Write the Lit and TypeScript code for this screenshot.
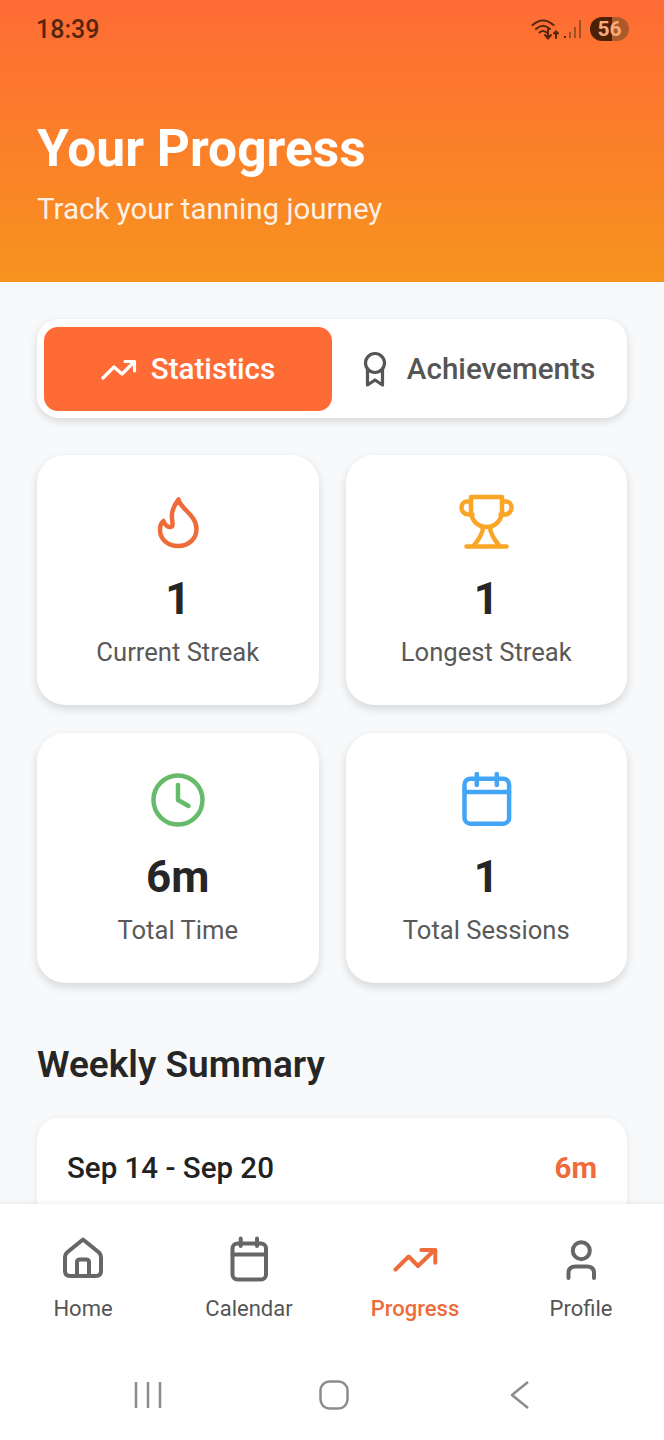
import { html, css, LitElement } from 'lit';
import { customElement } from 'lit/decorators.js';

const flame = html`<svg class="ico" width="56" height="56" viewBox="0 0 56 56" style="color:#ee6c39">
  <path d="M28.500 5.500C30.500 15 46.500 21 46.500 35C46.500 45 38.500 52 28 52C17.500 52 10 45 10 36C10 32 11.500 28.500 13.500 27C14.500 31 18.500 34 22 32.500C25 30 16.500 21 28.500 5.500Z"/>
</svg>`;

const trophy = html`<svg class="ico" width="56" height="56" viewBox="0 0 56 56" style="color:#f9a526">
  <path d="M13 3H44V17C44 26 37.500 33 28.500 33C19.500 33 13 26 13 17Z"/>
  <path d="M13 7.500H9C5.500 7.500 3.500 10.500 3.500 13.500C3.500 17 6 20.500 10 20.500H14.500"/>
  <path d="M44 7.500H48C51.500 7.500 53.500 10.500 53.500 13.500C53.500 17 51 20.500 47 20.500H42.500"/>
  <path d="M25 33C25 40 20.500 46 15.500 52"/>
  <path d="M32 33C32 40 36.500 46 41.500 52"/>
  <path d="M8.500 52.500H48.500"/>
</svg>`;

const clock = html`<svg class="ico" width="56" height="56" viewBox="0 0 56 56" style="color:#66bb6a">
  <circle cx="28" cy="28" r="24.500"/>
  <path d="M28 13V28L38.500 34"/>
</svg>`;

const calendar = html`<svg class="ico" width="56" height="56" viewBox="0 0 56 56" style="color:#42a5f5">
  <rect x="6.500" y="6.700" width="44.600" height="45" rx="6"/>
  <path d="M6.500 20H51.100M18.800 2V13M38.800 2V13"/>
</svg>`;

const tabTrend = html`<svg class="ico tab-ico" width="36" height="36" viewBox="0 0 36 36" style="color:#fff">
  <path d="M2 27L13 16L21 23L33 11"/>
  <path d="M24 10.500H33.500V20"/>
</svg>`;

const tabAward = html`<svg class="ico tab-ico" width="36" height="36" viewBox="0 0 36 36" style="color:#555">
  <circle cx="18" cy="12" r="9.500"/>
  <path d="M10.500 18V34L18 29L25.500 34V18"/>
</svg>`;

const navHome = html`<svg class="ico nav" width="48" height="48" viewBox="0 0 48 48">
  <path d="M24 3.500L40 16.500Q42 18.500 42 21.500V35Q42 40 37 40H11Q6 40 6 35V21.500Q6 18.500 8 16.500Z"/>
  <path d="M18 40V26Q18 23.500 21 23.500H27Q30 23.500 30 26V40"/>
</svg>`;

const navCalendar = html`<svg class="ico nav" width="48" height="48" viewBox="0 0 48 48">
  <rect x="7.500" y="7.500" width="33.500" height="36" rx="5"/>
  <path d="M7.500 18.500H41M15.700 2.500V10M32 2.500V10"/>
</svg>`;

const navProgress = html`<svg class="ico nav" width="48" height="48" viewBox="0 0 48 48" style="color:#ee6c39">
  <path d="M4.500 33.500L17.700 20.500L27 30L43.500 14"/>
  <path d="M30.300 14H44.300V26.700"/>
</svg>`;

const navProfile = html`<svg class="ico nav" width="48" height="48" viewBox="0 0 48 48">
  <circle cx="24.300" cy="14.700" r="8.500"/>
  <path d="M11.500 42V37Q11.500 30.500 18.500 30.500H30Q37 30.500 37 37V42"/>
</svg>`;

const stats = [
  { icon: flame, value: '1', label: 'Current Streak' },
  { icon: trophy, value: '1', label: 'Longest Streak' },
  { icon: clock, value: '6m', label: 'Total Time' },
  { icon: calendar, value: '1', label: 'Total Sessions' },
];

const navItems = [
  { icon: navHome, label: 'Home', active: false },
  { icon: navCalendar, label: 'Calendar', active: false },
  { icon: navProgress, label: 'Progress', active: true },
  { icon: navProfile, label: 'Profile', active: false },
];

@customElement('app-root')
export class AppRoot extends LitElement {

  static styles = [css`
    :host {
      display: flex;
      flex-direction: column;
      width: 664px;
      height: 1440px;
      overflow: hidden;
      background: #f8f9fa;
      font-family: Roboto, "Liberation Sans", sans-serif;
    }

    .ico {
      display: block;
      fill: none;
      stroke: currentColor;
      stroke-width: 4.5;
      stroke-linecap: round;
      stroke-linejoin: round;
      flex: none;
    }

    .ico.tab-ico { stroke-width: 3.2; }
    .ico.nav { stroke-width: 4; color: #666; }

    /* Header */
    .header {
      height: 282px;
      flex: none;
      box-sizing: border-box;
      padding: 14px 37px 0;
      background: linear-gradient(180deg, #ff6b35, #f7931e);
    }

    .status {
      display: flex;
      align-items: center;
      justify-content: space-between;
      height: 30px;
    }

    .time {
      font-size: 25px;
      font-weight: 500;
      color: #55260f;
      margin-left: -1px;
    }

    .status-icons {
      display: flex;
      align-items: center;
      margin-right: -2px;
    }

    .status-icons svg { display: block; }

    .battery {
      width: 39px;
      height: 24px;
      margin-left: 7px;
      border-radius: 12px;
      overflow: hidden;
      display: flex;
      align-items: center;
      justify-content: center;
      background: linear-gradient(90deg, #4d2106 0 56%, #ac5a2b 56%);
      color: #f8ab78;
      font-size: 21px;
      font-weight: 700;
      line-height: 24px;
    }

    h1 {
      margin: 75px 0 0;
      font-size: 51.5px;
      line-height: 60px;
      font-weight: 700;
      color: #fff;
    }

    .sub {
      margin-top: 12px;
      font-size: 29.5px;
      line-height: 36px;
      color: rgba(255, 255, 255, 0.9);
    }

    /* Content */
    .content {
      flex: 1;
      min-height: 0;
      overflow: hidden;
      padding: 37px 37px 0;
    }

    .tabs {
      display: flex;
      height: 99px;
      box-sizing: border-box;
      padding: 8px 7px 7px;
      background: #fff;
      border-radius: 22px;
      box-shadow: 0 3px 8px rgba(0, 0, 0, 0.14);
    }

    .tab {
      flex: 1;
      display: flex;
      align-items: center;
      justify-content: center;
      gap: 14px;
      border-radius: 14px;
      font-size: 29.6px;
      font-weight: 500;
      color: #555;
    }

    .tab.active {
      background: #ff6b35;
      color: #fff;
    }

    .grid {
      display: grid;
      grid-template-columns: 1fr 1fr;
      gap: 28px 27px;
      margin-top: 37px;
    }

    .card {
      height: 250px;
      box-sizing: border-box;
      padding-top: 39px;
      display: flex;
      flex-direction: column;
      align-items: center;
      background: #fff;
      border-radius: 28px;
      box-shadow: 0 4px 10px rgba(0, 0, 0, 0.14);
    }

    .value {
      margin-top: 23px;
      font-size: 44px;
      line-height: 52px;
      font-weight: 700;
      color: #262626;
    }

    .label {
      margin-top: 12px;
      font-size: 25.6px;
      line-height: 30px;
      color: #595959;
    }

    h2 {
      margin: 60px 0 0;
      font-size: 37px;
      line-height: 44px;
      font-weight: 600;
      color: #262626;
    }

    .week {
      display: flex;
      justify-content: space-between;
      align-items: flex-start;
      margin-top: 31px;
      height: 200px;
      box-sizing: border-box;
      padding: 32px 30px 0;
      background: #fff;
      border-radius: 22px;
      box-shadow: 0 2px 8px rgba(0, 0, 0, 0.08);
      font-size: 29.5px;
      line-height: 36px;
      font-weight: 500;
      color: #222;
    }

    .week .total {
      font-weight: 700;
      color: #ee6c39;
    }

    /* Bottom navigation */
    .bottom {
      flex: none;
      height: 236px;
      background: #fff;
      box-shadow: 0 -1px 4px rgba(0, 0, 0, 0.07);
      position: relative;
    }

    .nav-row {
      display: grid;
      grid-template-columns: repeat(4, 1fr);
      padding-top: 32px;
    }

    .nav-item {
      display: flex;
      flex-direction: column;
      align-items: center;
      font-size: 22px;
      line-height: 28px;
      font-weight: 400;
      color: #555;
    }

    .nav-item span { margin-top: 11px; }
    .nav-item.active { color: #ee6c39; font-weight: 500; }

    .system {
      display: grid;
      grid-template-columns: 163px 186px 181px;
      justify-content: start;
      margin-top: 57px;
    }

    .system svg {
      display: block;
      justify-self: end;
      fill: none;
      stroke: #8c8c8c;
      stroke-width: 2.5;
      stroke-linejoin: round;
    }
  `]

  render() {
    return html`
      <div class="header">
        <div class="status">
          <span class="time">18:39</span>
          <div class="status-icons">
            <svg width="28" height="24" viewBox="0 0 28 24" fill="none" stroke="#55260f" stroke-width="2" stroke-linecap="round">
              <path d="M1.500 8Q12 -1 22.500 8"/>
              <path d="M5 12Q12 5.500 19 12"/>
              <path d="M8.500 15.500Q12 12.500 15.500 15.500"/>
              <path d="M17 12V21M14 18L17 21.500L20 18"/>
              <path d="M25 21V14.500M23 16.500L25 14.500L27 16.500"/>
            </svg>
            <svg style="margin-left:4px" width="20" height="24" viewBox="0 0 20 24" fill="none" stroke="#9b5224" stroke-width="2">
              <path d="M2 21V19" stroke="#55260f"/>
              <path d="M7 21V15M12 21V10M17 21V3"/>
            </svg>
            <div class="battery">56</div>
          </div>
        </div>
        <h1>Your Progress</h1>
        <div class="sub">Track your tanning journey</div>
      </div>

      <div class="content">
        <div class="tabs">
          <div class="tab active">${tabTrend}Statistics</div>
          <div class="tab">${tabAward}Achievements</div>
        </div>

        <div class="grid">
          ${stats.map(s => html`
            <div class="card">
              ${s.icon}
              <div class="value">${s.value}</div>
              <div class="label">${s.label}</div>
            </div>
          `)}
        </div>

        <h2>Weekly Summary</h2>
        <div class="week">
          <span>Sep 14 - Sep 20</span>
          <span class="total">6m</span>
        </div>
      </div>

      <div class="bottom">
        <div class="nav-row">
          ${navItems.map(n => html`
            <div class="nav-item ${n.active ? 'active' : ''}">
              ${n.icon}
              <span>${n.label}</span>
            </div>
          `)}
        </div>
        <div class="system">
          <svg width="30" height="30" viewBox="0 0 30 30">
            <path d="M3 2V28M15 2V28M27 2V28"/>
          </svg>
          <svg width="30" height="30" viewBox="0 0 30 30">
            <rect x="1.500" y="1.500" width="27" height="27" rx="9"/>
          </svg>
          <svg width="20" height="30" viewBox="0 0 20 30">
            <path d="M18 2L2 15L18 28"/>
          </svg>
        </div>
      </div>
    `
  }
}
